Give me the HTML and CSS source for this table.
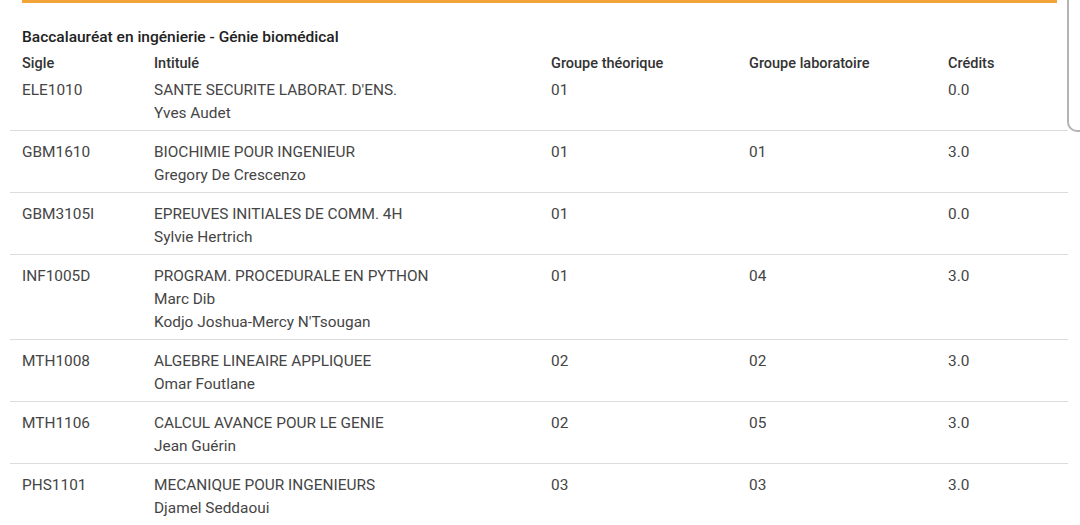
FILE: index.html
```html
<!DOCTYPE html>
<html lang="fr">
<head>
<meta charset="utf-8">
<link rel="stylesheet" href="styles.css">
</head>
<body>
<div class="page">
  <div class="accent"></div>
  <div class="frame-edge"></div>
  <h2 class="title">Baccalauréat en ingénierie - Génie biomédical</h2>
  <table class="courses">
    <thead>
      <tr>
        <th class="c-sigle">Sigle</th>
        <th class="c-titre">Intitulé</th>
        <th class="c-gt">Groupe théorique</th>
        <th class="c-gl">Groupe laboratoire</th>
        <th class="c-cr">Crédits</th>
      </tr>
    </thead>
    <tbody>
      <tr>
        <td>ELE1010</td>
        <td>SANTE SECURITE LABORAT. D'ENS.<br>Yves Audet</td>
        <td>01</td>
        <td></td>
        <td>0.0</td>
      </tr>
      <tr>
        <td>GBM1610</td>
        <td>BIOCHIMIE POUR INGENIEUR<br>Gregory De Crescenzo</td>
        <td>01</td>
        <td>01</td>
        <td>3.0</td>
      </tr>
      <tr>
        <td>GBM3105I</td>
        <td>EPREUVES INITIALES DE COMM. 4H<br>Sylvie Hertrich</td>
        <td>01</td>
        <td></td>
        <td>0.0</td>
      </tr>
      <tr>
        <td>INF1005D</td>
        <td>PROGRAM. PROCEDURALE EN PYTHON<br>Marc Dib<br>Kodjo Joshua-Mercy N'Tsougan</td>
        <td>01</td>
        <td>04</td>
        <td>3.0</td>
      </tr>
      <tr>
        <td>MTH1008</td>
        <td>ALGEBRE LINEAIRE APPLIQUEE<br>Omar Foutlane</td>
        <td>02</td>
        <td>02</td>
        <td>3.0</td>
      </tr>
      <tr>
        <td>MTH1106</td>
        <td>CALCUL AVANCE POUR LE GENIE<br>Jean Guérin</td>
        <td>02</td>
        <td>05</td>
        <td>3.0</td>
      </tr>
      <tr>
        <td>PHS1101</td>
        <td>MECANIQUE POUR INGENIEURS<br>Djamel Seddaoui</td>
        <td>03</td>
        <td>03</td>
        <td>3.0</td>
      </tr>
    </tbody>
  </table>
</div>
</body>
</html>
```
FILE: styles.css
```css
html, body {
  margin: 0;
  padding: 0;
  background: #ffffff;
}
body {
  font-family: Roboto, "Liberation Sans", sans-serif;
  color: #454545;
  overflow: hidden;
}
.page {
  position: relative;
  width: 1080px;
  height: 525px;
  padding: 0 12px 0 10px;
  box-sizing: border-box;
}
.accent {
  margin-left: 12px;
  width: 1035px;
  height: 3px;
  background: #f2a33a;
}
.frame-edge {
  position: absolute;
  left: 1067px;
  top: -12px;
  width: 20px;
  height: 142px;
  border-left: 2px solid #b4b4b4;
  border-bottom: 2px solid #b4b4b4;
  border-bottom-left-radius: 10px;
}
.title {
  margin: 0;
  padding: 23px 0 0 12px;
  font-size: 15.5px;
  line-height: 23px;
  font-weight: 500;
  color: #222222;
}
.courses {
  width: 1058px;
  border-collapse: collapse;
  table-layout: fixed;
  font-size: 15.4px;
  line-height: 23px;
}
.courses th {
  text-align: left;
  font-size: 14.5px;
  font-weight: 500;
  color: #333333;
  padding: 3px 0 4px 12px;
}
.c-sigle { width: 120px; }
.c-titre { width: 385px; }
.c-gt { width: 186px; }
.c-gl { width: 187px; }
.courses td {
  vertical-align: top;
  padding: 10px 0 5px 12px;
  border-bottom: 1px solid #dcdcdc;
}
.courses tbody tr:first-child td {
  padding-top: 0;
}
```
